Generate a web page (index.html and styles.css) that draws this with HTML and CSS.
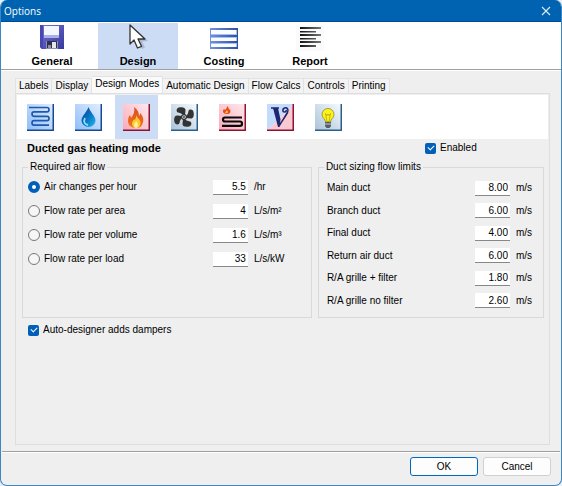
FILE: index.html
```html
<!DOCTYPE html>
<html lang="en">
<head>
<meta charset="utf-8">
<title>Options</title>
<link rel="stylesheet" href="styles.css">
</head>
<body>
<form class="window">
  <header class="titlebar">
    <h1 class="title">Options</h1>
    <button type="button" class="close" aria-label="Close">
      <svg width="10" height="10" viewBox="0 0 10 10"><path d="M1 1l8 8M9 1l-8 8" stroke="#dcebf8" stroke-width="1.1" fill="none"/></svg>
    </button>
  </header>

  <nav class="sections">
    <button type="button" class="section">
      <svg width="28" height="28" viewBox="0 0 28 28">
        <defs><linearGradient id="disk" x1="0" y1="0" x2="1" y2="1"><stop offset="0" stop-color="#7373d8"/><stop offset="1" stop-color="#38389c"/></linearGradient></defs>
        <path d="M2 2h24v24H4l-2-2z" fill="url(#disk)"/>
        <path d="M2 2h3v24H4l-2-2z" fill="#4747b4"/>
        <path d="M6 3h15v11H6z" fill="#f4f6ff"/><path d="M6 12h15v3H6z" fill="#a9aee8"/>
        <path d="M8 18h12v8H8z" fill="#8f92b4"/><path d="M9 18h10v7H9z" fill="#30304c"/><path d="M14 19h4v6h-4z" fill="#e6e6ea"/><path d="M10 22h3v3h-3z" fill="#8e90a4"/>
      </svg>
      <span>General</span>
    </button>
    <button type="button" class="section selected" aria-current="page">
      <svg width="28" height="28" viewBox="0 0 28 28">
        <path d="M9 4l15 14-6 .5 3 6-3 1.500-4-7z" fill="#8e9bb2" opacity=".55"/>
        <path d="M6 2v19l4-4 3.500 8 4-1.700-3.500-7.300H21z" fill="#fff" stroke="#333" stroke-width="1.3" stroke-linejoin="round"/>
      </svg>
      <span>Design</span>
    </button>
    <button type="button" class="section">
      <svg width="28" height="28" viewBox="0 0 28 28">
        <defs><linearGradient id="bars" x1="0" y1="0" x2="1" y2="0"><stop offset="0" stop-color="#6f93e0"/><stop offset="1" stop-color="#2a4fa4"/></linearGradient></defs>
        <path d="M0 5h28v21H0z" fill="url(#bars)"/>
        <path d="M1 7h26v5H1zM1 14h26v4H1zM1 20h26v4H1z" fill="#a9bfee"/>
        <path d="M1 7h25v4H1zM1 15h25v3H1zM1 21h25v3H1z" fill="#fbfcff"/>
      </svg>
      <span>Costing</span>
    </button>
    <button type="button" class="section">
      <svg width="28" height="28" viewBox="0 0 28 28">
        <defs><linearGradient id="lines" gradientUnits="userSpaceOnUse" x1="4" y1="0" x2="25" y2="0"><stop offset="0" stop-color="#111"/><stop offset="1" stop-color="#777"/></linearGradient></defs>
        <path d="M0 2h28v26H0z" fill="#fafafa"/>
        <path d="M4 4h21v2H4zM4 8h16v1.500H4zM4 11h21v2H4zM4 15h16v1.500H4zM4 18h21v2H4zM4 22h16v2H4z" fill="url(#lines)"/>
      </svg>
      <span>Report</span>
    </button>
  </nav>

  <main class="content">
    <div class="tabs" role="tablist">
      <button type="button" class="tab" role="tab">Labels</button>
      <button type="button" class="tab" role="tab">Display</button>
      <button type="button" class="tab active" role="tab" aria-selected="true">Design Modes</button>
      <button type="button" class="tab" role="tab">Automatic Design</button>
      <button type="button" class="tab" role="tab">Flow Calcs</button>
      <button type="button" class="tab" role="tab">Controls</button>
      <button type="button" class="tab" role="tab">Printing</button>
    </div>

    <section class="panel" role="tabpanel">
      <div class="modes">
        <button type="button" class="mode" aria-label="Hydronic coil">
          <svg width="27" height="27" viewBox="0 0 27 27">
            <defs><linearGradient id="blue" x1="1" y1="0" x2="0" y2="1"><stop offset="0" stop-color="#e2efff"/><stop offset="1" stop-color="#8dbcf8"/></linearGradient></defs>
            <path d="M0 0h27v27H0z" fill="url(#blue)"/><path d="M25.500 0H27v27H0v-1.500h25.500z" fill="#164a94"/>
            <path d="M2 3.500h18q2 0 2 2.200t-2 2.200H7q-2 0-2 2.200t2 2.200h13q2 0 2 2.200t-2 2.200H7q-2 0-2 2.200t2 2.200h15" fill="none" stroke="#1d58ae" stroke-width="1.700"/>
          </svg>
        </button>
        <button type="button" class="mode" aria-label="Water">
          <svg width="27" height="27" viewBox="0 0 27 27">
            <defs><linearGradient id="drop" x1="0" y1="0" x2="1" y2="1"><stop offset="0" stop-color="#073f87"/><stop offset=".55" stop-color="#0878c8"/><stop offset="1" stop-color="#25bdec"/></linearGradient></defs>
            <path d="M0 0h27v27H0z" fill="url(#blue)"/><path d="M25.500 0H27v27H0v-1.500h25.500z" fill="#164a94"/>
            <path d="M13.500 3C12 8 6.500 12 6.500 16.500a7 6.500 0 0 0 14 0C20.500 12 15 8 13.500 3z" fill="url(#drop)"/>
            <path d="M10 14c-2 4 0 6.500 3 7" fill="none" stroke="#8adcff" stroke-width="1.800"/>
          </svg>
        </button>
        <button type="button" class="mode selected" aria-label="Ducted gas heating" aria-pressed="true">
          <svg width="27" height="27" viewBox="0 0 27 27">
            <defs><linearGradient id="pink" x1="1" y1="0" x2="0" y2="1"><stop offset="0" stop-color="#ffe9ee"/><stop offset="1" stop-color="#f9a9b8"/></linearGradient>
            <linearGradient id="flame" x1="0" y1="0" x2="0" y2="1"><stop offset="0" stop-color="#d94b20"/><stop offset="1" stop-color="#ef7a16"/></linearGradient></defs>
            <path d="M0 0h27v27H0z" fill="url(#pink)"/><path d="M25.500 0H27v27H0v-1.500h25.500z" fill="#8e1234"/>
            <path d="M11 3c4 3 5 6 5 9 1-1 1-2 1-3 4 4 4 8 2 12-1 2-3 3-6 3-5 0-8-3-8-7 0-3 1-5 2-6l1 3c3-4 4-7 3-11z" fill="url(#flame)"/>
            <path d="M13.500 11c0 3 4 4 4 8 0 3-2 5-4.500 5S9 22 9 19.500c0-2 1-3 2-4 1 1 2-1 2.500-4.500z" fill="#ffc733"/>
            <path d="M13 16c0 2 2 2.500 2 5 0 2-1 3-2 3s-2-1-2-3 2-2 2-5z" fill="#fff0a0"/>
          </svg>
        </button>
        <button type="button" class="mode" aria-label="Ventilation">
          <svg width="27" height="27" viewBox="0 0 27 27">
            <defs><linearGradient id="steel" x1="1" y1="0" x2="0" y2="1"><stop offset="0" stop-color="#f8fbfd"/><stop offset="1" stop-color="#a9c2d8"/></linearGradient></defs>
            <path d="M0 0h27v27H0z" fill="url(#steel)"/><path d="M25.500 0H27v27H0v-1.500h25.500z" fill="#2d5f8c"/>
            <g transform="translate(13 13)" fill="#333">
              <path d="M0-1.500C-2-3-3-4-6-4.500-8-5-8-9-5-9.500-1-10.500 2-9 1.500-6.500L1-2z"/>
              <path d="M0-1.500C-2-3-3-4-6-4.500-8-5-8-9-5-9.500-1-10.500 2-9 1.500-6.500L1-2z" transform="rotate(90)"/>
              <path d="M0-1.500C-2-3-3-4-6-4.500-8-5-8-9-5-9.500-1-10.500 2-9 1.500-6.500L1-2z" transform="rotate(180)"/>
              <path d="M0-1.500C-2-3-3-4-6-4.500-8-5-8-9-5-9.500-1-10.500 2-9 1.500-6.500L1-2z" transform="rotate(270)"/>
              <circle r="3"/><circle r="1.800" fill="#e5ebef"/><circle r=".9"/>
            </g>
          </svg>
        </button>
        <button type="button" class="mode" aria-label="Underfloor heating">
          <svg width="27" height="27" viewBox="0 0 27 27">
            <path d="M0 0h27v27H0z" fill="url(#pink)"/><path d="M25.500 0H27v27H0v-1.500h25.500z" fill="#8e1234"/>
            <path d="M8 2c2 2 2 3 2 4l1-1c1 3 0 5-3 5-4 0-5-3-3-5l1 1c1-1 2-2 2-4z" fill="#e84a13"/><path d="M8 6c0 1 1 1 1 2s-2 2-3 0c1 0 1-1 2-2z" fill="#ffc24b"/>
            <path d="M23 13.500H6q-2 0-2 2t2 2h15q2 0 2 2.200t-2 2.200H3" fill="none" stroke="#090909" stroke-width="2.200"/>
          </svg>
        </button>
        <button type="button" class="mode" aria-label="Refrigeration">
          <svg width="27" height="27" viewBox="0 0 27 27">
            <path d="M0 0h27L0 27z" fill="#c4dcfb"/><path d="M27 0v27H0z" fill="#fac8d0"/><path d="M25.500 0H27v27H0v-1.500h25.500z" fill="#8e1234"/>
            <path d="M4 4h8" stroke="#1d2670" stroke-width="1.500"/>
            <path d="M6 4h5l2.500 11.500L12.500 23h-1.500z" fill="#1d2670"/>
            <path d="M12 22c3-5 6-9 8.500-13.500C22 5.500 20 3 17.500 4c-2.500 1-2 4 0 4 1.500 0 2-1 1.500-2" fill="none" stroke="#1d2670" stroke-width="1.600"/>
          </svg>
        </button>
        <button type="button" class="mode" aria-label="Lighting">
          <svg width="27" height="27" viewBox="0 0 27 27">
            <path d="M0 0h27v27H0z" fill="url(#steel)"/><path d="M25.500 0H27v27H0v-1.500h25.500z" fill="#2d5f8c"/>
            <path d="M10.500 18c0-3-3.500-4-3.500-7.500a6 6 0 0 1 12 0c0 3.500-3.500 4.500-3.500 7.500z" fill="#fff21c" stroke="#8c8a2a" stroke-width=".8"/>
            <path d="M10.500 9.500l1.500 2 1-1.500 1 1.500 1.500-2-1.500 8h-2z" fill="none" stroke="#a99c10" stroke-width=".7"/>
            <path d="M10 18h6v4l-1.500 2h-3L10 22z" fill="#555c62"/><path d="M10 20h6" stroke="#c9d0d4"/>
          </svg>
        </button>
      </div>

      <div class="mode-head">
        <h2 class="mode-title">Ducted gas heating mode</h2>
        <label class="option enabled"><input type="checkbox" class="check" checked>Enabled</label>
      </div>

      <div class="groups">
        <fieldset class="group">
          <legend>Required air flow</legend>
          <div class="rows airflow">
            <div class="row"><label class="option"><input type="radio" class="radio" name="flow" checked>Air changes per hour</label><input class="value" type="text" value="5.5" aria-label="Air changes per hour"><span class="unit">/hr</span></div>
            <div class="row"><label class="option"><input type="radio" class="radio" name="flow">Flow rate per area</label><input class="value" type="text" value="4" aria-label="Flow rate per area"><span class="unit">L/s/m²</span></div>
            <div class="row"><label class="option"><input type="radio" class="radio" name="flow">Flow rate per volume</label><input class="value" type="text" value="1.6" aria-label="Flow rate per volume"><span class="unit">L/s/m³</span></div>
            <div class="row"><label class="option"><input type="radio" class="radio" name="flow">Flow rate per load</label><input class="value" type="text" value="33" aria-label="Flow rate per load"><span class="unit">L/s/kW</span></div>
          </div>
        </fieldset>
        <fieldset class="group">
          <legend>Duct sizing flow limits</legend>
          <div class="rows limits">
            <div class="row"><label for="main">Main duct</label><input class="value" type="text" id="main" value="8.00"><span class="unit">m/s</span></div>
            <div class="row"><label for="branch">Branch duct</label><input class="value" type="text" id="branch" value="6.00"><span class="unit">m/s</span></div>
            <div class="row"><label for="final">Final duct</label><input class="value" type="text" id="final" value="4.00"><span class="unit">m/s</span></div>
            <div class="row"><label for="return">Return air duct</label><input class="value" type="text" id="return" value="6.00"><span class="unit">m/s</span></div>
            <div class="row"><label for="filter">R/A grille + filter</label><input class="value" type="text" id="filter" value="1.80"><span class="unit">m/s</span></div>
            <div class="row"><label for="nofilter">R/A grille no filter</label><input class="value" type="text" id="nofilter" value="2.60"><span class="unit">m/s</span></div>
          </div>
        </fieldset>
      </div>

      <div class="dampers">
        <label class="option"><input type="checkbox" class="check" checked>Auto-designer adds dampers</label>
      </div>
    </section>
  </main>

  <footer class="footer">
    <button type="button" class="button primary">OK</button>
    <button type="button" class="button">Cancel</button>
  </footer>
</form>
</body>
</html>
```
FILE: styles.css
```css
* {
  box-sizing: border-box;
}

body {
  margin: 0;
  background: #e8eef4;
  color: #000;
  font: 10px/14px "Liberation Sans", Arial, sans-serif;
}

button,
input {
  margin: 0;
  padding: 0;
  border: 0;
  background: none;
  color: inherit;
  font: inherit;
}

svg {
  display: block;
}

.window {
  display: flex;
  flex-direction: column;
  min-height: 100vh;
  overflow: hidden;
  border: 1px solid #3c86c4;
  border-top: 0;
  border-radius: 7px;
  background: #efefef;
}

.titlebar {
  display: flex;
  align-items: center;
  justify-content: space-between;
  height: 22px;
  padding: 0 10px 0 3px;
  border-bottom: 1px solid #004a98;
  background: #0063b1;
}

.title {
  margin: 0;
  color: #fff;
  font: 10px/20px "Open Sans", "Noto Sans", sans-serif;
}

.sections {
  display: flex;
  gap: 6px;
  padding: 1px 11px 0;
  border-bottom: 1px solid #a0a0a0;
  background: #fff;
}

.section {
  display: flex;
  flex-direction: column;
  align-items: center;
  width: 80px;
  height: 46px;
  font-weight: bold;
  font-size: 11px;
}

.section span {
  margin-top: 3px;
}

.selected {
  background: #ccdcf5;
}

.content {
  display: flex;
  flex: 1;
  flex-direction: column;
  padding: 5px 11px 6px 14px;
  border-top: 1px solid #fff;
}

.tabs {
  display: flex;
  align-items: flex-end;
}

.tab {
  height: 15px;
  padding: 0 3px;
  border: 1px solid #e2e2e2;
  border-bottom: 0;
  border-left: 0;
  background: #f3f3f3;
}

.tab:first-child {
  border-left: 1px solid #e2e2e2;
}

.tab.active {
  height: 17px;
  padding-bottom: 3px;
  background: #fafafa;
}

.panel {
  flex: 1;
  padding: 1px;
  border: 1px solid #dedede;
}

.modes {
  display: flex;
  gap: 5px;
  padding: 0 2px;
  background: #fff;
}

.mode {
  display: grid;
  place-items: center;
  width: 43px;
  height: 44px;
}

.mode-head {
  display: flex;
  align-items: center;
  padding: 2px 10px 0;
}

.mode-title {
  flex: 1;
  margin: 0;
  font-size: 11px;
}

.enabled {
  width: 113px;
}

.option {
  display: flex;
  align-items: center;
  gap: 4px;
}

.check,
.radio {
  appearance: none;
  display: grid;
  place-items: center;
  width: 11px;
  height: 11px;
}

.check {
  border-radius: 2px;
  background: #005fb8;
}

.check::after {
  width: 5px;
  height: 3px;
  margin-bottom: 2px;
  border: solid #fff;
  border-width: 0 0 1px 1px;
  content: "";
  transform: rotate(-45deg);
}

.radio {
  width: 12px;
  height: 12px;
  border: 1px solid #777;
  border-radius: 50%;
  background: #f6f6f6;
}

.radio:checked {
  border: 4px solid #005fb8;
  background: #fff;
}

.groups {
  display: grid;
  grid-template-columns: 291fr 227fr;
  gap: 6px;
  padding: 6px 4px 0 5px;
}

.group {
  min-width: 0;
  margin: 0;
  padding: 2px 5px 5px;
  border: 1px solid #d9d9d9;
}

.group legend {
  padding: 0 2px;
  line-height: 12px;
}

.rows {
  display: grid;
}

.airflow {
  grid-auto-rows: 24px;
}

.limits {
  grid-template-rows: repeat(6, 1fr);
  height: 137px;
  padding: 2px 0 0 3px;
}

.row {
  display: flex;
  align-items: center;
}

.row label {
  flex: 1;
}

.value {
  width: 35px;
  height: 15px;
  padding-right: 2px;
  border-bottom: 1px solid #888;
  background: #fff;
  text-align: right;
}

.unit {
  width: 58px;
  padding-left: 6px;
}

.limits .unit {
  width: 28px;
}

.dampers {
  padding: 5px 11px;
}

.footer {
  display: flex;
  justify-content: flex-end;
  gap: 5px;
  margin: 0 1px;
  padding: 5px 9px 9px;
  border-top: 1px solid #a0a0a0;
  box-shadow: inset 0 1px #fff;
}

.button {
  width: 68px;
  height: 19px;
  border: 1px solid #d0d0d0;
  border-radius: 3px;
  background: #fdfdfd;
}

.primary {
  border-color: #0067c0;
}
```
